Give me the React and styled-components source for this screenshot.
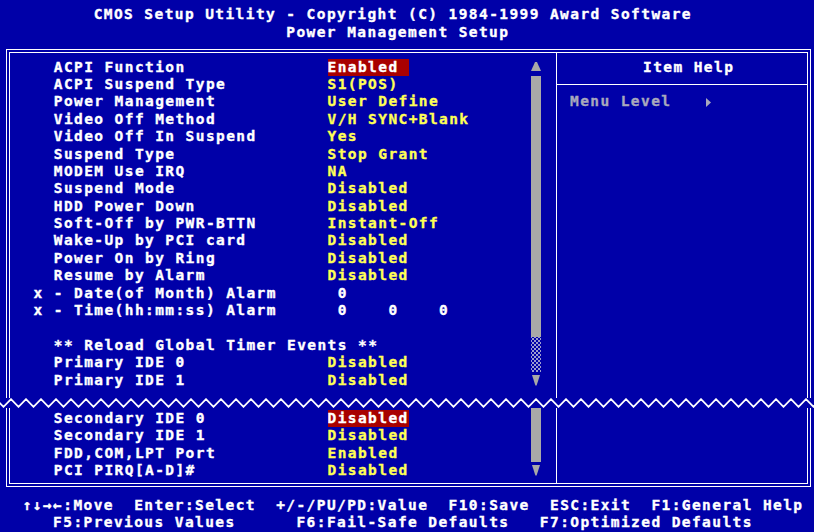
import React from "react";
import styled, { createGlobalStyle } from "styled-components";

const CELL = 10.14;
const ROW = 17.4;
const BLUE = "#0000a8";
const WHITE = "#ffffff";
const YELLOW = "#ffff55";
const GREY = "#a8a8a8";
const RED = "#a80000";
const FONT_SIZE = 14.5;

const GlobalStyle = createGlobalStyle`
  html, body { margin: 0; padding: 0; background: ${BLUE}; }
  #root { width: 814px; height: 532px; }
`;

const Screen = styled.div`
  width: 814px;
  height: 532px;
  box-sizing: border-box;
  overflow: hidden;
  padding-top: 6.4px;
  background: ${BLUE};
  color: ${WHITE};
  font-family: "DejaVu Sans Mono", "Liberation Mono", monospace;
  font-weight: bold;
  font-size: ${FONT_SIZE}px;
  line-height: ${ROW}px;
  letter-spacing: ${CELL - FONT_SIZE * 0.602}px;
  -webkit-text-stroke: 0.35px currentColor;
  display: flex;
  flex-direction: column;
`;

const Header = styled.header`
  display: flex;
  flex-direction: column;
  padding-left: 2.4px;
  margin-bottom: 7.8px;
`;

const TitleLine = styled.div`
  height: ${ROW}px;
  white-space: pre;
  padding-left: ${(p) => p.$col * CELL}px;
`;

const Frame = styled.section`
  margin: 0 3px 0 6px;
  border: 1px solid ${WHITE};
  padding: 2px;
  ${(p) =>
    p.$open === "bottom"
      ? "border-bottom: 0; padding-bottom: 0;"
      : "border-top: 0; padding-top: 0;"}
`;

const FrameBody = styled.div`
  border: 1px solid ${WHITE};
  ${(p) => (p.$open === "bottom" ? "border-bottom: 0;" : "border-top: 0;")}
  display: grid;
  grid-template-columns: 521px 10px 15px 1fr;
`;

const List = styled.div`
  padding: ${(p) => p.$pt}px 0 ${(p) => p.$pb}px 23.5px;
`;

const Row = styled.div`
  display: grid;
  grid-template-columns: ${2 * CELL}px ${27 * CELL}px 1fr;
  height: ${ROW}px;
  white-space: pre;
`;

const Marker = styled.span``;

const Label = styled.span`
  grid-column: ${(p) => (p.$wide ? "2 / -1" : "2")};
`;

const Value = styled.span`
  justify-self: start;
  color: ${(p) => (p.$plain ? WHITE : YELLOW)};
  ${(p) =>
    p.$selected &&
    `background: ${RED}; color: ${WHITE}; width: ${8 * CELL}px;`}
`;

const Scroll = styled.div`
  display: flex;
  flex-direction: column;
  padding-top: ${(p) => p.$pt}px;
`;

const ScrollArrow = styled.div`
  height: ${ROW}px;
  display: flex;
  align-items: center;
  justify-content: center;
  svg { display: block; }
`;

const ScrollTrack = styled.div`
  height: ${(p) => p.$h}px;
  background: ${GREY};
`;

const ScrollShade = styled.div`
  height: ${(p) => p.$h}px;
  background-image: radial-gradient(circle, #9c9cd0 0.8px, transparent 1.1px),
    radial-gradient(circle, #9c9cd0 0.8px, transparent 1.1px);
  background-size: 4px 4px;
  background-position: 0 0, 2px 2px;
`;

const Spacer = styled.div``;

const Help = styled.aside`
  grid-column: 4;
  border-left: 1px solid ${WHITE};
  display: flex;
  flex-direction: column;
  padding-top: ${(p) => p.$pt}px;
  white-space: pre;
`;

const HelpTitle = styled.div`
  height: ${ROW}px;
  padding-left: 86px;
`;

const HelpRule = styled.div`
  height: 1px;
  background: ${WHITE};
  margin: 8px 0 ${ROW - 9}px;
`;

const HelpText = styled.div`
  height: ${ROW}px;
  padding-left: 13px;
  color: #a8a8bc;
  display: flex;
  align-items: center;
`;

const Pointer = styled.svg`
  display: block;
  margin-left: ${3 * CELL + 4}px;
`;

const Break = styled.svg`
  display: block;
  width: 814px;
  height: 10px;
`;

const Footer = styled.footer`
  margin-top: 10.3px;
  padding-left: 2.4px;
  white-space: pre;
`;

const FooterLine = styled.div`
  height: ${ROW}px;
`;

const upperRows = [
  { label: "ACPI Function", value: "Enabled", selected: true },
  { label: "ACPI Suspend Type", value: "S1(POS)" },
  { label: "Power Management", value: "User Define" },
  { label: "Video Off Method", value: "V/H SYNC+Blank" },
  { label: "Video Off In Suspend", value: "Yes" },
  { label: "Suspend Type", value: "Stop Grant" },
  { label: "MODEM Use IRQ", value: "NA" },
  { label: "Suspend Mode", value: "Disabled" },
  { label: "HDD Power Down", value: "Disabled" },
  { label: "Soft-Off by PWR-BTTN", value: "Instant-Off" },
  { label: "Wake-Up by PCI card", value: "Disabled" },
  { label: "Power On by Ring", value: "Disabled" },
  { label: "Resume by Alarm", value: "Disabled" },
  { marker: "x", label: "- Date(of Month) Alarm", value: " 0", plain: true },
  { marker: "x", label: "- Time(hh:mm:ss) Alarm", value: " 0    0    0", plain: true },
  { label: "" },
  { label: "** Reload Global Timer Events **", wide: true },
  { label: "Primary IDE 0", value: "Disabled" },
  { label: "Primary IDE 1", value: "Disabled" },
];

const lowerRows = [
  { label: "Secondary IDE 0", value: "Disabled", selected: true },
  { label: "Secondary IDE 1", value: "Disabled" },
  { label: "FDD,COM,LPT Port", value: "Enabled" },
  { label: "PCI PIRQ[A-D]#", value: "Disabled" },
];

const UpArrow = () => (
  <svg width="10" height="10" viewBox="0 0 10 10">
    <polygon points="4,0 6,0 10,9 0,9" fill={GREY} />
  </svg>
);

const DownArrow = () => (
  <svg width="10" height="11" viewBox="0 0 10 11">
    <polygon points="1,0 9,0 5.6,10.5 4.4,10.5" fill={GREY} />
  </svg>
);

function Rows({ rows }) {
  return rows.map((r, i) => (
    <Row key={i}>
      <Marker>{r.marker || ""}</Marker>
      <Label $wide={r.wide}>{r.label}</Label>
      {r.value !== undefined && (
        <Value $plain={r.plain} $selected={r.selected}>
          {r.value}
        </Value>
      )}
    </Row>
  ));
}

function ZigZag() {
  const pts = [];
  for (let i = 0, x = -4; x <= 830; i++, x += 7.5) {
    pts.push(`${x},${i % 2 === 0 ? 1.2 : 8.8}`);
  }
  return (
    <Break viewBox="0 0 814 10">
      <polyline points={pts.join(" ")} fill="none" stroke={WHITE} strokeWidth="1.8" />
    </Break>
  );
}

export default function App() {
  return (
    <>
      <GlobalStyle />
      <Screen>
        <Header>
          <TitleLine $col={9}>CMOS Setup Utility - Copyright (C) 1984-1999 Award Software</TitleLine>
          <TitleLine $col={28}>Power Management Setup</TitleLine>
        </Header>

        <Frame $open="bottom">
          <FrameBody $open="bottom">
            <List $pt={5.6} $pb={8.8}>
              <Rows rows={upperRows} />
            </List>
            <Scroll $pt={5.6}>
              <ScrollArrow>
                <UpArrow />
              </ScrollArrow>
              <ScrollTrack $h={15 * ROW} />
              <ScrollShade $h={2 * ROW} />
              <ScrollArrow>
                <DownArrow />
              </ScrollArrow>
            </Scroll>
            <Spacer />
            <Help $pt={5.6}>
              <HelpTitle>Item Help</HelpTitle>
              <HelpRule />
              <HelpText>
                Menu Level
                <Pointer width="5" height="9" viewBox="0 0 5 9">
                  <polygon points="0,0 5,4.5 0,9" fill="#a8a8bc" />
                </Pointer>
              </HelpText>
            </Help>
          </FrameBody>
        </Frame>

        <ZigZag />

        <Frame $open="top">
          <FrameBody $open="top">
            <List $pt={2.3} $pb={3.1}>
              <Rows rows={lowerRows} />
            </List>
            <Scroll $pt={0}>
              <ScrollTrack $h={2.3 + 3 * ROW} />
              <ScrollArrow>
                <DownArrow />
              </ScrollArrow>
            </Scroll>
            <Spacer />
            <Help $pt={0} />
          </FrameBody>
        </Frame>

        <Footer>
          <FooterLine>{"  ↑↓→←:Move  Enter:Select  +/-/PU/PD:Value  F10:Save  ESC:Exit  F1:General Help"}</FooterLine>
          <FooterLine>{"     F5:Previous Values      F6:Fail-Safe Defaults   F7:Optimized Defaults"}</FooterLine>
        </Footer>
      </Screen>
    </>
  );
}
